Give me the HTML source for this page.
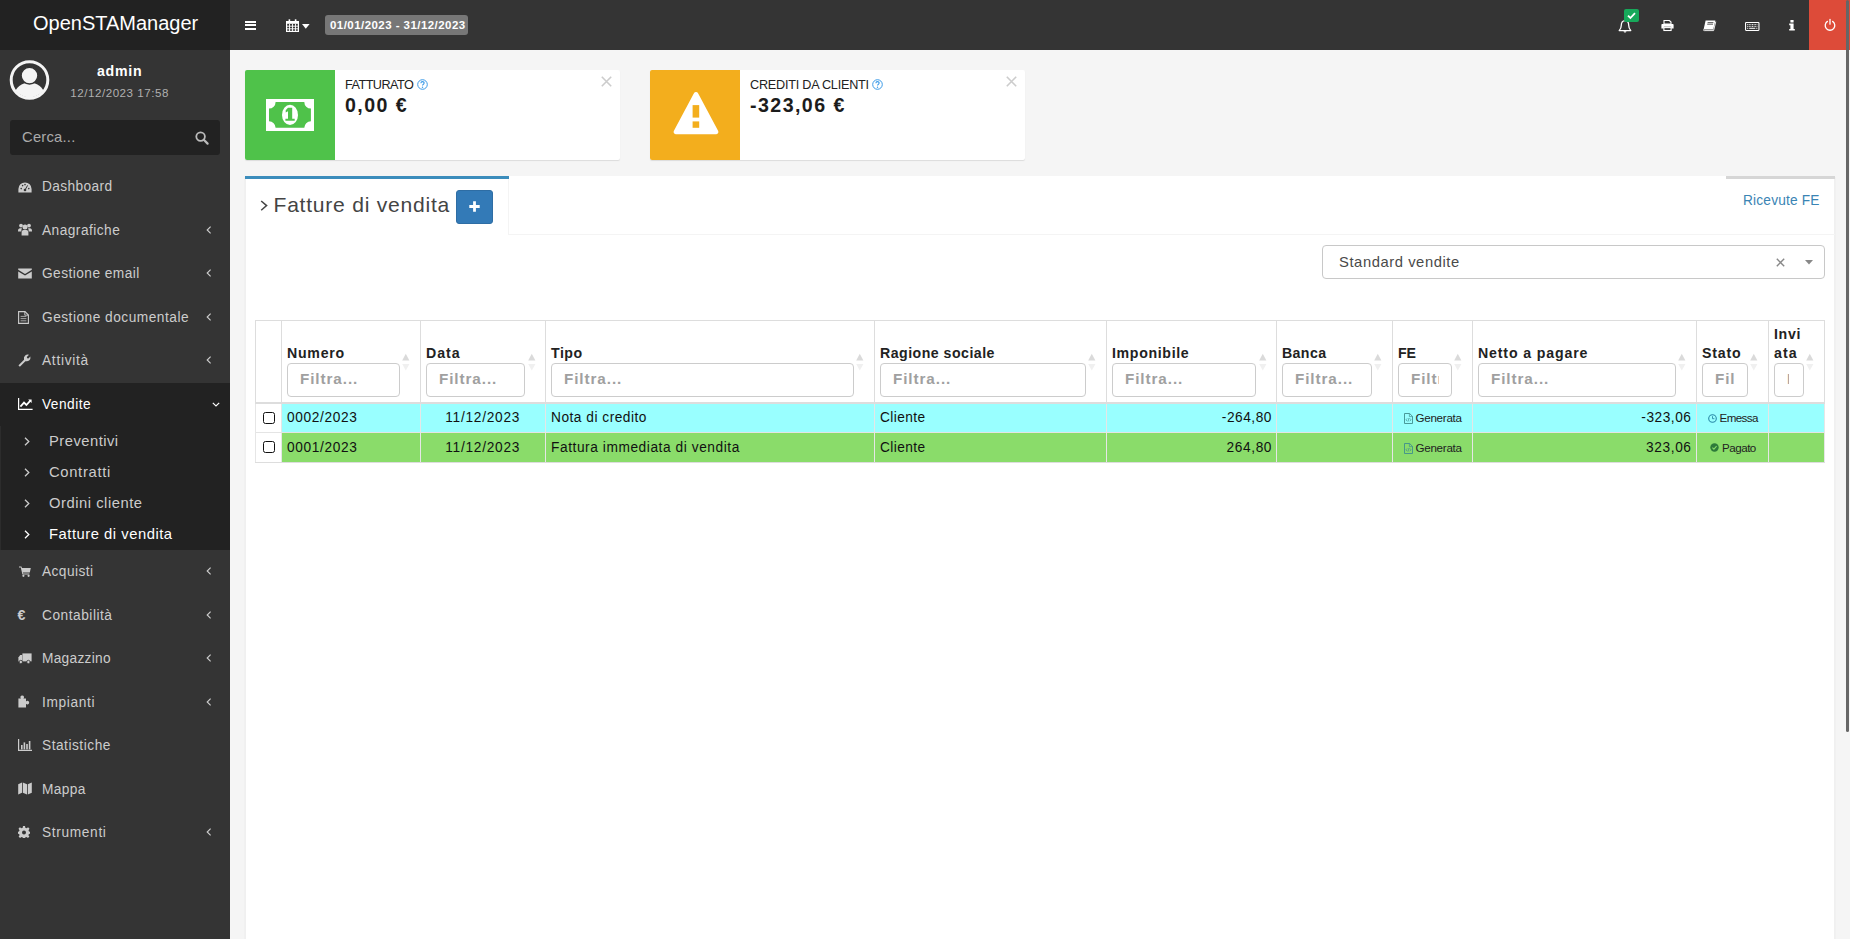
<!DOCTYPE html>
<html><head><meta charset="utf-8"><style>

*{box-sizing:border-box;margin:0;padding:0}
html,body{width:1850px;height:939px;overflow:hidden;background:#f5f5f5;font-family:"Liberation Sans",sans-serif;color:#333}
.a{position:absolute}
.t{position:absolute;white-space:nowrap}
svg{position:absolute;overflow:visible}
</style></head><body>
<div class="a" style="left:0;top:0;width:230px;height:50px;background:#222"></div>
<span class="t" style="left:33px;top:0;font-family:'Liberation Sans',sans-serif;font-size:20px;line-height:47px;color:#fff">OpenSTAManager</span>
<div class="a" style="left:230px;top:0;width:1620px;height:50px;background:#343434"></div>
<div class="a" style="left:245px;top:21px;width:11px;height:2px;background:#fff"></div>
<div class="a" style="left:245px;top:24.2px;width:11px;height:2px;background:#fff"></div>
<div class="a" style="left:245px;top:28.2px;width:11px;height:2px;background:#fff"></div>
<svg style="left:286px;top:19px" width="13" height="13" viewBox="0 0 13 13">
<rect x="0.6" y="2.6" width="11.8" height="9.8" fill="none" stroke="#fff" stroke-width="1.2"></rect>
<rect x="0.6" y="2.6" width="11.8" height="2.2" fill="#fff"></rect>
<path d="M0.6 7.2H12.4M0.6 9.8H12.4M3.5 4.8V12.4M6.5 4.8V12.4M9.5 4.8V12.4" stroke="#fff" stroke-width="0.9"></path>
<rect x="2.6" y="0.3" width="1.6" height="3.2" fill="#fff"></rect><rect x="8.8" y="0.3" width="1.6" height="3.2" fill="#fff"></rect>
</svg>
<svg style="left:302px;top:23.5px" width="8" height="5" viewBox="0 0 8 5"><path d="M0 0H7.6L3.8 4.8Z" fill="#fff"></path></svg>
<div class="a" style="left:325px;top:15px;width:143px;height:20px;background:#777;border-radius:3px"></div>
<span class="t k1045" style="left: 330px; top: 15px; font-size: 11.49px; font-weight: bold; line-height: 20px; color: rgb(255, 255, 255); letter-spacing: 0.455px;">01/01/2023 - 31/12/2023</span>
<svg style="left:1618px;top:19px" width="14" height="14" viewBox="0 0 14 14">
<path d="M7 1.6C4.6 1.6 3.3 3.6 3.3 6.2C3.3 9 2.4 10.3 1.2 11.6H12.8C11.6 10.3 10.7 9 10.7 6.2C10.7 3.6 9.4 1.6 7 1.6Z" fill="none" stroke="#fff" stroke-width="1.3" stroke-linejoin="round"></path>
<path d="M5.6 12.2H8.4C8.4 13.2 7.6 13.6 7 13.6C6.4 13.6 5.6 13.2 5.6 12.2Z" fill="#fff"></path>
</svg>
<div class="a" style="left:1624px;top:9px;width:15px;height:13px;background:#17a85a;border-radius:2px"></div>
<svg style="left:1627px;top:12px" width="9" height="7" viewBox="0 0 9 7"><path d="M1 3.6L3.4 6L8 1.2" fill="none" stroke="#fff" stroke-width="1.8"></path></svg>
<svg style="left:1660.5px;top:20px" width="13" height="11" viewBox="0 0 13 11">
<path d="M3 0.5H8.4L10 2.1V4H3Z" fill="none" stroke="#fff" stroke-width="1.1"></path>
<path d="M1.2 4H11.8Q12.6 4 12.6 4.8V8.4H10.2V6.8H2.8V8.4H0.4V4.8Q0.4 4 1.2 4Z" fill="#fff"></path>
<rect x="2.9" y="7.6" width="7.2" height="2.9" fill="none" stroke="#fff" stroke-width="1.1"></rect>
</svg>
<svg style="left:1703px;top:20px" width="14" height="11" viewBox="0 0 14 11">
<path d="M2.6 0.4H12.4L10.2 9.4H0.6Z" fill="#fff"></path>
<path d="M0.5 9.6Q0.3 10.6 1.3 10.6H10.6L12.8 1.6" fill="none" stroke="#fff" stroke-width="0.9"></path>
<path d="M4.6 2.6H10.4M4.2 4.2H10" stroke="#343434" stroke-width="0.8"></path>
</svg>
<svg style="left:1745px;top:21.5px" width="14.5" height="9" viewBox="0 0 14.5 9">
<rect x="0.55" y="0.55" width="13.4" height="7.9" rx="0.6" fill="none" stroke="#fff" stroke-width="1.1"></rect>
<path d="M2.2 2.6H12.3M2.2 4.4H12.3" stroke="#fff" stroke-width="0.9" stroke-dasharray="1 0.6"></path>
<path d="M2.2 6.3H3.2M4.2 6.3H10.3M11.3 6.3H12.3" stroke="#fff" stroke-width="1"></path>
</svg>
<svg style="left:1788.5px;top:19.8px" width="6" height="11" viewBox="0 0 6 11">
<rect x="1.4" y="0" width="3.2" height="2.4" rx="0.5" fill="#fff"></rect>
<path d="M0.2 3.6H4.6V9H5.8V10.6H0.2V9H1.4V5.2H0.2Z" fill="#fff"></path>
</svg>
<div class="a" style="left:1809px;top:0;width:41px;height:50px;background:#dd4b39"></div>
<svg style="left:1823.5px;top:17.9px" width="12" height="12.5" viewBox="0 0 12 12.5">
<path d="M3.4 3.4A4.8 4.8 0 1 0 8.6 3.4" fill="none" stroke="#fff" stroke-width="1.3" stroke-linecap="round"></path>
<path d="M6 1.5V6.2" stroke="#fff" stroke-width="1.3" stroke-linecap="round"></path>
</svg>
<div class="a" style="left:0;top:50px;width:230px;height:889px;background:#343434"></div>
<svg style="left:10px;top:60px" width="40" height="40" viewBox="0 0 40 40">
<defs><clipPath id="cc"><circle cx="19.5" cy="20" r="17.4"></circle></clipPath></defs>
<circle cx="19.5" cy="20" r="18.3" fill="none" stroke="#f4f4f4" stroke-width="3"></circle>
<g clip-path="url(#cc)" fill="#f4f4f4"><ellipse cx="19.5" cy="33.6" rx="14.4" ry="10.8"></ellipse></g>
<circle cx="19.5" cy="15.6" r="8.4" fill="#f4f4f4" stroke="#343434" stroke-width="1.4"></circle>
</svg>
<span class="t " style="left: 97px; top: 62px; font-size: 14.17px; font-weight: bold; line-height: 18px; color: rgb(255, 255, 255); letter-spacing: 0.728px;">admin</span>
<span class="t " style="left: 70.3px; top: 84.2px; font-size: 11.6px; line-height: 17px; color: rgb(176, 176, 176); letter-spacing: 0.521px;">12/12/2023 17:58</span>
<div class="a" style="left:10px;top:120px;width:210px;height:34.5px;background:#222;border-radius:3px"></div>
<span class="t " style="left: 22px; top: 121px; font-size: 14.77px; line-height: 33px; color: rgb(170, 170, 170); letter-spacing: 0.221px;">Cerca...</span>
<svg style="left:195px;top:131px" width="14" height="14" viewBox="0 0 14 14">
<circle cx="5.6" cy="5.6" r="4.3" fill="none" stroke="#bbb" stroke-width="1.8"></circle><path d="M8.8 8.8L12.6 12.6" stroke="#bbb" stroke-width="2.2" stroke-linecap="round"></path></svg>
<span class="t " style="left: 42px; top: 165.2px; font-size: 13.71px; line-height: 43.5px; color: rgb(204, 204, 204); letter-spacing: 0.387px;">Dashboard</span>
<svg style="left:17.5px;top:181.75px" width="14" height="11" viewBox="0 0 14 11"><path d="M7 0.4A6.6 6.6 0 0 0 0.4 7V10.4H13.6V7A6.6 6.6 0 0 0 7 0.4Z" fill="#ccc"></path><circle cx="7" cy="8" r="1.3" fill="#343434"></circle><path d="M7 8L9.6 3.4" stroke="#343434" stroke-width="1"></path><circle cx="3.2" cy="6.6" r="0.8" fill="#343434"></circle><circle cx="4.6" cy="3.6" r="0.8" fill="#343434"></circle><circle cx="10.8" cy="6.6" r="0.8" fill="#343434"></circle><circle cx="7" cy="2.6" r="0.8" fill="#343434"></circle></svg>
<span class="t " style="left: 42px; top: 208.7px; font-size: 13.71px; line-height: 43.5px; color: rgb(204, 204, 204); letter-spacing: 0.464px;">Anagrafiche</span>
<svg style="left:17.5px;top:223.25px" width="14" height="13" viewBox="0 0 14 13"><circle cx="3" cy="2.6" r="1.9" fill="#ccc"></circle><circle cx="11" cy="2.6" r="1.9" fill="#ccc"></circle><circle cx="7" cy="4" r="2.5" fill="#ccc"></circle><path d="M0 8Q0 5.2 2.2 5.2H4Q3.4 6 3.4 7.4V8.4H0Z" fill="#ccc"></path><path d="M14 8Q14 5.2 11.8 5.2H10Q10.6 6 10.6 7.4V8.4H14Z" fill="#ccc"></path><path d="M3.6 12.6V9.8Q3.6 7 5.6 7H8.4Q10.4 7 10.4 9.8V12.6Z" fill="#ccc"></path></svg>
<svg style="left:205.5px;top:225.75px" width="6" height="8" viewBox="0 0 6 8"><path d="M4.6 0.6L1.2 4L4.6 7.4" fill="none" stroke="#ccc" stroke-width="1.15"></path></svg>
<span class="t " style="left: 42px; top: 252.2px; font-size: 13.71px; line-height: 43.5px; color: rgb(204, 204, 204); letter-spacing: 0.452px;">Gestione email</span>
<svg style="left:17.5px;top:267.75px" width="14" height="11" viewBox="0 0 14 11"><path d="M0.2 0.4H13.8V1.8L7 6L0.2 1.8Z" fill="#ccc"></path><path d="M0.2 3.4L7 7.6L13.8 3.4V10.6H0.2Z" fill="#ccc"></path></svg>
<svg style="left:205.5px;top:269.25px" width="6" height="8" viewBox="0 0 6 8"><path d="M4.6 0.6L1.2 4L4.6 7.4" fill="none" stroke="#ccc" stroke-width="1.15"></path></svg>
<span class="t " style="left: 42px; top: 295.7px; font-size: 13.71px; line-height: 43.5px; color: rgb(204, 204, 204); letter-spacing: 0.496px;">Gestione documentale</span>
<svg style="left:18px;top:311.05px" width="11" height="13" viewBox="0 0 11 13"><path d="M0.6 0.6H7L10.4 4V12.4H0.6Z" fill="none" stroke="#ccc" stroke-width="1.1"></path><path d="M6.8 0.6V4.2H10.4" fill="none" stroke="#ccc" stroke-width="0.9"></path><path d="M2.6 5.4H8.4M2.6 7.6H8.4M2.6 9.8H8.4" stroke="#ccc" stroke-width="0.75"></path></svg>
<svg style="left:205.5px;top:312.75px" width="6" height="8" viewBox="0 0 6 8"><path d="M4.6 0.6L1.2 4L4.6 7.4" fill="none" stroke="#ccc" stroke-width="1.15"></path></svg>
<span class="t " style="left: 42px; top: 339.2px; font-size: 13.71px; line-height: 43.5px; color: rgb(204, 204, 204); letter-spacing: 0.715px;">Attività</span>
<svg style="left:17.5px;top:353.75px" width="13" height="13" viewBox="0 0 13 13"><path d="M1.6 12.4Q0.6 12.2 0.6 11.2L6 5.8Q5.4 3.2 7.2 1.6Q8.8 0.2 11 0.8L8.8 3L9.2 4.2L10.4 4.6L12.4 2.4Q12.8 4.6 11.4 6.2Q9.8 7.8 7.4 7.2L2.4 12.2Q2 12.6 1.6 12.4Z" fill="#ccc"></path></svg>
<svg style="left:205.5px;top:356.25px" width="6" height="8" viewBox="0 0 6 8"><path d="M4.6 0.6L1.2 4L4.6 7.4" fill="none" stroke="#ccc" stroke-width="1.15"></path></svg>
<div class="a" style="left:0;top:382.5px;width:230px;height:167.2px;background:#222"></div>
<div class="a" style="left:0;top:425.5px;width:1px;height:124px;background:#2c2c2c"></div>
<span class="t " style="left: 42px; top: 382.7px; font-size: 13.71px; line-height: 43.5px; color: rgb(255, 255, 255); letter-spacing: 0.48px;">Vendite</span>
<svg style="left:18px;top:397.75px" width="15" height="12" viewBox="0 0 15 12"><path d="M0.6 0V11.4H14.6" fill="none" stroke="#fff" stroke-width="1.2"></path><path d="M2.4 8.6L6 4.6L8.4 7L12.4 2.6" fill="none" stroke="#fff" stroke-width="1.8"></path><path d="M10.2 1.6H13.6V5Z" fill="#fff"></path></svg>
<svg style="left:212px;top:401.75px" width="8" height="5" viewBox="0 0 8 5"><path d="M0.8 0.8L4 4L7.2 0.8" fill="none" stroke="#fff" stroke-width="1.15"></path></svg>
<span class="t " style="left: 42px; top: 550.2px; font-size: 13.71px; line-height: 43.5px; color: rgb(204, 204, 204); letter-spacing: 0.428px;">Acquisti</span>
<svg style="left:18.5px;top:565.75px" width="12" height="11" viewBox="0 0 12 11"><path d="M0 0.4H2.4L3 2H11.8L10.8 6.6H3.8L4.2 7.6H10.4V8.6H3.4L1.8 1.4H0Z" fill="#ccc"></path><circle cx="4.4" cy="9.8" r="1.1" fill="#ccc"></circle><circle cx="9.6" cy="9.8" r="1.1" fill="#ccc"></circle></svg>
<svg style="left:205.5px;top:567.25px" width="6" height="8" viewBox="0 0 6 8"><path d="M4.6 0.6L1.2 4L4.6 7.4" fill="none" stroke="#ccc" stroke-width="1.15"></path></svg>
<span class="t " style="left: 42px; top: 593.7px; font-size: 13.71px; line-height: 43.5px; color: rgb(204, 204, 204); letter-spacing: 0.521px;">Contabilità</span>
<span class="t" style="left: 17.5px; top: 604.75px; font-size: 14.17px; font-weight: bold; line-height: 20px; color: rgb(204, 204, 204); letter-spacing: 1.172px;">€</span>
<svg style="left:205.5px;top:610.75px" width="6" height="8" viewBox="0 0 6 8"><path d="M4.6 0.6L1.2 4L4.6 7.4" fill="none" stroke="#ccc" stroke-width="1.15"></path></svg>
<span class="t " style="left: 42px; top: 637.2px; font-size: 13.71px; line-height: 43.5px; color: rgb(204, 204, 204); letter-spacing: 0.286px;">Magazzino</span>
<svg style="left:17.5px;top:652.75px" width="14" height="11" viewBox="0 0 14 11"><path d="M4.4 0.4H13.6V8.4H4.4Z" fill="#ccc"></path><path d="M0.4 4.6L2.2 2H4.2V8.4H0.4Z" fill="#ccc"></path><circle cx="2.8" cy="9" r="1.7" fill="#ccc" stroke="#343434" stroke-width="0.8"></circle><circle cx="10.4" cy="9" r="1.7" fill="#ccc" stroke="#343434" stroke-width="0.8"></circle></svg>
<svg style="left:205.5px;top:654.25px" width="6" height="8" viewBox="0 0 6 8"><path d="M4.6 0.6L1.2 4L4.6 7.4" fill="none" stroke="#ccc" stroke-width="1.15"></path></svg>
<span class="t " style="left: 42px; top: 680.7px; font-size: 13.71px; line-height: 43.5px; color: rgb(204, 204, 204); letter-spacing: 0.662px;">Impianti</span>
<svg style="left:17.5px;top:695.25px" width="13" height="13" viewBox="0 0 13 13"><path d="M0.4 3.6H3Q2.2 2.8 2.4 1.8Q2.8 0.4 4.2 0.4Q5.6 0.4 6 1.8Q6.2 2.8 5.4 3.6H8V6.4Q8.8 5.6 9.8 5.8Q11.2 6.2 11.2 7.6Q11.2 9 9.8 9.4Q8.8 9.6 8 8.8V12.6H0.4Z" fill="#ccc"></path></svg>
<svg style="left:205.5px;top:697.75px" width="6" height="8" viewBox="0 0 6 8"><path d="M4.6 0.6L1.2 4L4.6 7.4" fill="none" stroke="#ccc" stroke-width="1.15"></path></svg>
<span class="t " style="left: 42px; top: 724.2px; font-size: 13.71px; line-height: 43.5px; color: rgb(204, 204, 204); letter-spacing: 0.517px;">Statistiche</span>
<svg style="left:17.5px;top:739.25px" width="14" height="12" viewBox="0 0 14 12"><path d="M0.6 0V11.4H14" fill="none" stroke="#ccc" stroke-width="1.2"></path><rect x="3" y="6" width="1.6" height="4.4" fill="#ccc"></rect><rect x="5.6" y="3.4" width="1.6" height="7" fill="#ccc"></rect><rect x="8.2" y="5" width="1.6" height="5.4" fill="#ccc"></rect><rect x="10.8" y="2" width="1.6" height="8.4" fill="#ccc"></rect></svg>
<span class="t " style="left: 42px; top: 767.7px; font-size: 13.71px; line-height: 43.5px; color: rgb(204, 204, 204); letter-spacing: 0.35px;">Mappa</span>
<svg style="left:17.5px;top:782.25px" width="14" height="13" viewBox="0 0 14 13"><path d="M0.2 2.2L4 0.4V10.8L0.2 12.6Z" fill="#ccc"></path><path d="M4.8 0.4L9 2.2V12.6L4.8 10.8Z" fill="#ccc"></path><path d="M9.8 2.2L13.8 0.4V10.8L9.8 12.6Z" fill="#ccc"></path></svg>
<span class="t " style="left: 42px; top: 811.2px; font-size: 13.71px; line-height: 43.5px; color: rgb(204, 204, 204); letter-spacing: 0.656px;">Strumenti</span>
<svg style="left:18px;top:826.25px" width="12" height="12" viewBox="0 0 12 12"><path d="M5 0H7L7.3 1.7L8.6 2.3L10.1 1.3L11.5 2.7L10.5 4.2L11 5.5L12 5.7V7.7L10.9 7.9L10.4 9.2L11.4 10.6L10 12L8.5 11L7.2 11.5L7 12H5L4.8 11.5L3.5 11L2 12L0.6 10.6L1.6 9.2L1.1 7.9L0 7.7V5.7L1 5.5L1.5 4.2L0.5 2.7L1.9 1.3L3.4 2.3L4.7 1.7Z" fill="#ccc"></path><circle cx="6" cy="6.6" r="2" fill="#343434"></circle></svg>
<svg style="left:205.5px;top:828.25px" width="6" height="8" viewBox="0 0 6 8"><path d="M4.6 0.6L1.2 4L4.6 7.4" fill="none" stroke="#ccc" stroke-width="1.15"></path></svg>
<span class="t " style="left: 49px; top: 425.5px; font-size: 14.77px; line-height: 31px; color: rgb(204, 204, 204); letter-spacing: 0.475px;">Preventivi</span>
<svg style="left:23.5px;top:436.5px" width="6" height="9" viewBox="0 0 6 9"><path d="M1 0.8L4.8 4.5L1 8.2" fill="none" stroke="#ccc" stroke-width="1.3"></path></svg>
<span class="t " style="left: 49px; top: 456.5px; font-size: 14.77px; line-height: 31px; color: rgb(204, 204, 204); letter-spacing: 0.677px;">Contratti</span>
<svg style="left:23.5px;top:467.5px" width="6" height="9" viewBox="0 0 6 9"><path d="M1 0.8L4.8 4.5L1 8.2" fill="none" stroke="#ccc" stroke-width="1.3"></path></svg>
<span class="t " style="left: 49px; top: 487.5px; font-size: 14.77px; line-height: 31px; color: rgb(204, 204, 204); letter-spacing: 0.53px;">Ordini cliente</span>
<svg style="left:23.5px;top:498.5px" width="6" height="9" viewBox="0 0 6 9"><path d="M1 0.8L4.8 4.5L1 8.2" fill="none" stroke="#ccc" stroke-width="1.3"></path></svg>
<span class="t " style="left: 49px; top: 518.5px; font-size: 14.77px; line-height: 31px; color: rgb(255, 255, 255); letter-spacing: 0.526px;">Fatture di vendita</span>
<svg style="left:23.5px;top:529.5px" width="6" height="9" viewBox="0 0 6 9"><path d="M1 0.8L4.8 4.5L1 8.2" fill="none" stroke="#fff" stroke-width="1.3"></path></svg>
<div class="a" style="left:245px;top:70px;width:375px;height:90px;background:#fff;border-radius:2px;box-shadow:0 1px 1px rgba(0,0,0,.1)"></div>
<div class="a" style="left:245px;top:70px;width:90px;height:90px;background:#4fc24a;border-radius:2px 0 0 2px"></div>
<svg style="left:266px;top:99px" width="48" height="32" viewBox="0 0 48 32">
<rect x="0" y="0" width="48" height="32" fill="#fff"></rect>
<path d="M9.6 3H38.3A6.6 6.6 0 0 0 44.9 9.6V22.2A6.6 6.6 0 0 0 38.3 28.8H9.6A6.6 6.6 0 0 0 3 22.2V9.6A6.6 6.6 0 0 0 9.6 3Z" fill="#4fc24a"></path>
<ellipse cx="24" cy="15.9" rx="8" ry="10.1" fill="#fff"></ellipse>
<path d="M22 8.8H26.2V19.8H28.7V21.8H19.4V19.8H22V12.3L19.7 13.6V11.2Z" fill="#4fc24a"></path>
</svg>
<span class="t " style="left: 345px; top: 77.8px; font-size: 12.66px; line-height: 14px; color: rgb(34, 34, 34); letter-spacing: -0.545px;">FATTURATO</span>
<svg style="left:416.5px;top:79px" width="11" height="11" viewBox="0 0 11 11"><circle cx="5.5" cy="5.5" r="4.8" fill="none" stroke="#3a9ae8" stroke-width="1"></circle><path d="M3.9 4.2Q3.9 2.6 5.5 2.6Q7.1 2.6 7.1 4Q7.1 4.9 6.2 5.4Q5.5 5.8 5.5 6.6" fill="none" stroke="#3a9ae8" stroke-width="1.1"></path><circle cx="5.5" cy="8.2" r="0.7" fill="#3a9ae8"></circle></svg>
<span class="t " style="left: 345px; top: 95.3px; font-size: 19.62px; font-weight: bold; line-height: 20px; color: rgb(28, 28, 28); letter-spacing: 1.445px;">0,00 €</span>
<svg style="left:600.5px;top:76px" width="11" height="11" viewBox="0 0 11 11"><path d="M0.8 0.8L10.2 10.2M10.2 0.8L0.8 10.2" stroke="#ccc" stroke-width="1.6"></path></svg>
<div class="a" style="left:650px;top:70px;width:375px;height:90px;background:#fff;border-radius:2px;box-shadow:0 1px 1px rgba(0,0,0,.1)"></div>
<div class="a" style="left:650px;top:70px;width:90px;height:90px;background:#f3ae1d;border-radius:2px 0 0 2px"></div>
<svg style="left:673px;top:92px" width="46" height="42" viewBox="0 0 46 42">
<path d="M23 0Q24.4 0 25.2 1.4L45.2 38.9Q45.8 40.3 44.9 41.3Q44.3 42.2 43 42.2H3Q1.7 42.2 1.1 41.3Q0.2 40.3 0.8 38.9L20.8 1.4Q21.6 0 23 0Z" fill="#fff"></path>
<rect x="19.6" y="13.1" width="6.6" height="12.5" fill="#f3ae1d"></rect>
<rect x="19.6" y="29.4" width="6.6" height="6.4" fill="#f3ae1d"></rect>
</svg>
<span class="t " style="left: 750px; top: 77.8px; font-size: 12.66px; line-height: 14px; color: rgb(34, 34, 34); letter-spacing: -0.234px;">CREDITI DA CLIENTI</span>
<svg style="left:872px;top:79px" width="11" height="11" viewBox="0 0 11 11"><circle cx="5.5" cy="5.5" r="4.8" fill="none" stroke="#3a9ae8" stroke-width="1"></circle><path d="M3.9 4.2Q3.9 2.6 5.5 2.6Q7.1 2.6 7.1 4Q7.1 4.9 6.2 5.4Q5.5 5.8 5.5 6.6" fill="none" stroke="#3a9ae8" stroke-width="1.1"></path><circle cx="5.5" cy="8.2" r="0.7" fill="#3a9ae8"></circle></svg>
<span class="t " style="left: 750px; top: 95.3px; font-size: 19.62px; font-weight: bold; line-height: 20px; color: rgb(28, 28, 28); letter-spacing: 1.429px;">-323,06 €</span>
<svg style="left:1005.5px;top:76px" width="11" height="11" viewBox="0 0 11 11"><path d="M0.8 0.8L10.2 10.2M10.2 0.8L0.8 10.2" stroke="#ccc" stroke-width="1.6"></path></svg>
<div class="a" style="left:245px;top:176px;width:1590px;height:770px;background:#fff;box-shadow:0 1px 1px rgba(0,0,0,.1)"></div>
<div class="a" style="left:245px;top:176px;width:1px;height:770px;background:#f0f0f0"></div>
<div class="a" style="left:1834px;top:176px;width:1px;height:770px;background:#f0f0f0"></div>
<div class="a" style="left:508px;top:234px;width:1327px;height:1px;background:#f4f4f4"></div>
<div class="a" style="left:245px;top:176px;width:264px;height:3px;background:#3c8dbc"></div>
<div class="a" style="left:508px;top:179px;width:1px;height:56px;background:#f4f4f4"></div>
<svg style="left:259.5px;top:199.5px" width="8" height="11.5" viewBox="0 0 8 11.5"><path d="M1.2 1L6.6 5.6L1.2 10.3" fill="none" stroke="#444" stroke-width="1.5"></path></svg>
<span class="t " style="left: 273.5px; top: 191px; font-size: 21.1px; line-height: 28px; color: rgb(68, 68, 68); letter-spacing: 0.752px;">Fatture di vendita</span>
<div class="a" style="left:456px;top:190px;width:37px;height:34px;background:#337ab7;border-radius:3px;border:1px solid #2e6da4"></div>
<svg style="left:469px;top:201px" width="11" height="11" viewBox="0 0 11 11"><path d="M5.5 0.3V10.7M0.3 5.5H10.7" stroke="#fff" stroke-width="2.8"></path></svg>
<div class="a" style="left:1726px;top:176px;width:109px;height:3px;background:#d6d6d6"></div>
<span class="t " style="left: 1743px; top: 190.5px; font-size: 13.71px; line-height: 20px; color: rgb(58, 132, 180); letter-spacing: 0.183px;">Ricevute FE</span>
<div class="a" style="left:1322px;top:245px;width:503px;height:34px;border:1px solid #c8c8c8;border-radius:4px;background:#fff"></div>
<span class="t " style="left: 1339px; top: 252px; font-size: 14.77px; line-height: 20px; color: rgb(74, 74, 74); letter-spacing: 0.571px;">Standard vendite</span>
<svg style="left:1775.5px;top:258px" width="9" height="9" viewBox="0 0 9 9"><path d="M0.8 0.8L8.2 8.2M8.2 0.8L0.8 8.2" stroke="#888" stroke-width="1.4"></path></svg>
<svg style="left:1805px;top:259.5px" width="8" height="5" viewBox="0 0 8 5"><path d="M0 0H8L4 4.4Z" fill="#888"></path></svg>
<div class="a" style="left:255px;top:320px;width:1570px;height:1px;background:#ddd"></div>
<div class="a" style="left:255px;top:402px;width:1570px;height:2px;background:#ddd"></div>
<div class="a" style="left:282px;top:404px;width:1542px;height:28px;background:#99ffff"></div>
<div class="a" style="left:282px;top:433px;width:1542px;height:29px;background:#8adc6a"></div>
<div class="a" style="left:255px;top:462px;width:1570px;height:1px;background:#ddd"></div>
<div class="a" style="left:255px;top:432px;width:1570px;height:1px;background:#e4e4e4"></div>
<div class="a" style="left:255px;top:320px;width:1px;height:82px;background:#ddd"></div>
<div class="a" style="left:255px;top:404px;width:1px;height:58px;background:#e6e6e6"></div>
<div class="a" style="left:281px;top:320px;width:1px;height:82px;background:#ddd"></div>
<div class="a" style="left:281px;top:404px;width:1px;height:58px;background:#e6e6e6"></div>
<div class="a" style="left:420px;top:320px;width:1px;height:82px;background:#ddd"></div>
<div class="a" style="left:420px;top:404px;width:1px;height:58px;background:#e6e6e6"></div>
<div class="a" style="left:545px;top:320px;width:1px;height:82px;background:#ddd"></div>
<div class="a" style="left:545px;top:404px;width:1px;height:58px;background:#e6e6e6"></div>
<div class="a" style="left:874px;top:320px;width:1px;height:82px;background:#ddd"></div>
<div class="a" style="left:874px;top:404px;width:1px;height:58px;background:#e6e6e6"></div>
<div class="a" style="left:1106px;top:320px;width:1px;height:82px;background:#ddd"></div>
<div class="a" style="left:1106px;top:404px;width:1px;height:58px;background:#e6e6e6"></div>
<div class="a" style="left:1276px;top:320px;width:1px;height:82px;background:#ddd"></div>
<div class="a" style="left:1276px;top:404px;width:1px;height:58px;background:#e6e6e6"></div>
<div class="a" style="left:1392px;top:320px;width:1px;height:82px;background:#ddd"></div>
<div class="a" style="left:1392px;top:404px;width:1px;height:58px;background:#e6e6e6"></div>
<div class="a" style="left:1472px;top:320px;width:1px;height:82px;background:#ddd"></div>
<div class="a" style="left:1472px;top:404px;width:1px;height:58px;background:#e6e6e6"></div>
<div class="a" style="left:1696px;top:320px;width:1px;height:82px;background:#ddd"></div>
<div class="a" style="left:1696px;top:404px;width:1px;height:58px;background:#e6e6e6"></div>
<div class="a" style="left:1768px;top:320px;width:1px;height:82px;background:#ddd"></div>
<div class="a" style="left:1768px;top:404px;width:1px;height:58px;background:#e6e6e6"></div>
<div class="a" style="left:1824px;top:320px;width:1px;height:82px;background:#ddd"></div>
<div class="a" style="left:1824px;top:404px;width:1px;height:58px;background:#e6e6e6"></div>
<span class="t " style="left: 287px; top: 344px; font-size: 14.17px; font-weight: bold; line-height: 19px; color: rgb(34, 34, 34); letter-spacing: 0.724px;">Numero</span>
<div class="a" style="left:287px;top:363px;width:113px;height:34px;border:1px solid #ccc;border-radius:4px;background:#fff;overflow:hidden"><div class="a" style="left:12px;right:12px;top:0;height:32px;overflow:hidden"><span class="t" style="left: 0px; top: -0.6px; font-size: 15.26px; font-weight: bold; line-height: 32px; color: rgb(160, 160, 160); letter-spacing: 0.908px;">Filtra...</span></div></div>
<svg style="left:402px;top:353px" width="8" height="17" viewBox="0 0 8 17"><path d="M0.2 7.6L3.8 0.8L7.4 7.6Z" fill="#dadada"></path><path d="M0.2 11L3.8 17.4L7.4 11Z" fill="#f0f0f0"></path></svg>
<span class="t " style="left: 426px; top: 344px; font-size: 14.17px; font-weight: bold; line-height: 19px; color: rgb(34, 34, 34); letter-spacing: 0.969px;">Data</span>
<div class="a" style="left:426px;top:363px;width:99px;height:34px;border:1px solid #ccc;border-radius:4px;background:#fff;overflow:hidden"><div class="a" style="left:12px;right:12px;top:0;height:32px;overflow:hidden"><span class="t" style="left: 0px; top: -0.6px; font-size: 15.26px; font-weight: bold; line-height: 32px; color: rgb(160, 160, 160); letter-spacing: 0.908px;">Filtra...</span></div></div>
<svg style="left:527.5px;top:353px" width="8" height="17" viewBox="0 0 8 17"><path d="M0.2 7.6L3.8 0.8L7.4 7.6Z" fill="#dadada"></path><path d="M0.2 11L3.8 17.4L7.4 11Z" fill="#f0f0f0"></path></svg>
<span class="t " style="left: 551px; top: 344px; font-size: 14.17px; font-weight: bold; line-height: 19px; color: rgb(34, 34, 34); letter-spacing: 0.484px;">Tipo</span>
<div class="a" style="left:551px;top:363px;width:302.5px;height:34px;border:1px solid #ccc;border-radius:4px;background:#fff;overflow:hidden"><div class="a" style="left:12px;right:12px;top:0;height:32px;overflow:hidden"><span class="t" style="left: 0px; top: -0.6px; font-size: 15.26px; font-weight: bold; line-height: 32px; color: rgb(160, 160, 160); letter-spacing: 0.908px;">Filtra...</span></div></div>
<svg style="left:856px;top:353px" width="8" height="17" viewBox="0 0 8 17"><path d="M0.2 7.6L3.8 0.8L7.4 7.6Z" fill="#dadada"></path><path d="M0.2 11L3.8 17.4L7.4 11Z" fill="#f0f0f0"></path></svg>
<span class="t " style="left: 880px; top: 344px; font-size: 14.17px; font-weight: bold; line-height: 19px; color: rgb(34, 34, 34); letter-spacing: 0.477px;">Ragione sociale</span>
<div class="a" style="left:880px;top:363px;width:206px;height:34px;border:1px solid #ccc;border-radius:4px;background:#fff;overflow:hidden"><div class="a" style="left:12px;right:12px;top:0;height:32px;overflow:hidden"><span class="t" style="left: 0px; top: -0.6px; font-size: 15.26px; font-weight: bold; line-height: 32px; color: rgb(160, 160, 160); letter-spacing: 0.908px;">Filtra...</span></div></div>
<svg style="left:1088px;top:353px" width="8" height="17" viewBox="0 0 8 17"><path d="M0.2 7.6L3.8 0.8L7.4 7.6Z" fill="#dadada"></path><path d="M0.2 11L3.8 17.4L7.4 11Z" fill="#f0f0f0"></path></svg>
<span class="t " style="left: 1112px; top: 344px; font-size: 14.17px; font-weight: bold; line-height: 19px; color: rgb(34, 34, 34); letter-spacing: 0.659px;">Imponibile</span>
<div class="a" style="left:1112px;top:363px;width:144px;height:34px;border:1px solid #ccc;border-radius:4px;background:#fff;overflow:hidden"><div class="a" style="left:12px;right:12px;top:0;height:32px;overflow:hidden"><span class="t" style="left: 0px; top: -0.6px; font-size: 15.26px; font-weight: bold; line-height: 32px; color: rgb(160, 160, 160); letter-spacing: 0.908px;">Filtra...</span></div></div>
<svg style="left:1258.5px;top:353px" width="8" height="17" viewBox="0 0 8 17"><path d="M0.2 7.6L3.8 0.8L7.4 7.6Z" fill="#dadada"></path><path d="M0.2 11L3.8 17.4L7.4 11Z" fill="#f0f0f0"></path></svg>
<span class="t " style="left: 1282px; top: 344px; font-size: 14.17px; font-weight: bold; line-height: 19px; color: rgb(34, 34, 34); letter-spacing: 0.384px;">Banca</span>
<div class="a" style="left:1282px;top:363px;width:90px;height:34px;border:1px solid #ccc;border-radius:4px;background:#fff;overflow:hidden"><div class="a" style="left:12px;right:12px;top:0;height:32px;overflow:hidden"><span class="t" style="left: 0px; top: -0.6px; font-size: 15.26px; font-weight: bold; line-height: 32px; color: rgb(160, 160, 160); letter-spacing: 0.908px;">Filtra...</span></div></div>
<svg style="left:1374px;top:353px" width="8" height="17" viewBox="0 0 8 17"><path d="M0.2 7.6L3.8 0.8L7.4 7.6Z" fill="#dadada"></path><path d="M0.2 11L3.8 17.4L7.4 11Z" fill="#f0f0f0"></path></svg>
<span class="t " style="left: 1398px; top: 344px; font-size: 14.17px; font-weight: bold; line-height: 19px; color: rgb(34, 34, 34); letter-spacing: -0.164px;">FE</span>
<div class="a" style="left:1398px;top:363px;width:54px;height:34px;border:1px solid #ccc;border-radius:4px;background:#fff;overflow:hidden"><div class="a" style="left:12px;right:12px;top:0;height:32px;overflow:hidden"><span class="t" style="left: 0px; top: -0.6px; font-size: 15.26px; font-weight: bold; line-height: 32px; color: rgb(160, 160, 160); letter-spacing: 0.908px;">Filtra...</span></div></div>
<svg style="left:1454px;top:353px" width="8" height="17" viewBox="0 0 8 17"><path d="M0.2 7.6L3.8 0.8L7.4 7.6Z" fill="#dadada"></path><path d="M0.2 11L3.8 17.4L7.4 11Z" fill="#f0f0f0"></path></svg>
<span class="t " style="left: 1478px; top: 344px; font-size: 14.17px; font-weight: bold; line-height: 19px; color: rgb(34, 34, 34); letter-spacing: 0.852px;">Netto a pagare</span>
<div class="a" style="left:1478px;top:363px;width:198px;height:34px;border:1px solid #ccc;border-radius:4px;background:#fff;overflow:hidden"><div class="a" style="left:12px;right:12px;top:0;height:32px;overflow:hidden"><span class="t" style="left: 0px; top: -0.6px; font-size: 15.26px; font-weight: bold; line-height: 32px; color: rgb(160, 160, 160); letter-spacing: 0.908px;">Filtra...</span></div></div>
<svg style="left:1678.4px;top:353px" width="8" height="17" viewBox="0 0 8 17"><path d="M0.2 7.6L3.8 0.8L7.4 7.6Z" fill="#dadada"></path><path d="M0.2 11L3.8 17.4L7.4 11Z" fill="#f0f0f0"></path></svg>
<span class="t " style="left: 1702px; top: 344px; font-size: 14.17px; font-weight: bold; line-height: 19px; color: rgb(34, 34, 34); letter-spacing: 0.822px;">Stato</span>
<div class="a" style="left:1702px;top:363px;width:46px;height:34px;border:1px solid #ccc;border-radius:4px;background:#fff;overflow:hidden"><div class="a" style="left:12px;right:12px;top:0;height:32px;overflow:hidden"><span class="t" style="left: 0px; top: -0.6px; font-size: 15.26px; font-weight: bold; line-height: 32px; color: rgb(160, 160, 160); letter-spacing: 0.908px;">Filtra...</span></div></div>
<svg style="left:1750px;top:353px" width="8" height="17" viewBox="0 0 8 17"><path d="M0.2 7.6L3.8 0.8L7.4 7.6Z" fill="#dadada"></path><path d="M0.2 11L3.8 17.4L7.4 11Z" fill="#f0f0f0"></path></svg>
<span class="t " style="left: 1774px; top: 325px; font-size: 14.17px; font-weight: bold; line-height: 19px; color: rgb(34, 34, 34); letter-spacing: 0.66px;">Invi</span>
<span class="t " style="left: 1774px; top: 344px; font-size: 14.17px; font-weight: bold; line-height: 19px; color: rgb(34, 34, 34); letter-spacing: 1.099px;">ata</span>
<div class="a" style="left:1774px;top:363px;width:30px;height:34px;border:1px solid #ccc;border-radius:4px;background:#fff;overflow:hidden"><div class="a" style="left:12px;right:13.7px;top:0;height:32px;overflow:hidden"><span class="t" style="left: 0px; top: -0.6px; font-size: 15.26px; font-weight: bold; line-height: 32px; color: rgb(160, 160, 160); letter-spacing: 0.908px;">Filtra...</span></div></div>
<svg style="left:1806px;top:353px" width="8" height="17" viewBox="0 0 8 17"><path d="M0.2 7.6L3.8 0.8L7.4 7.6Z" fill="#dadada"></path><path d="M0.2 11L3.8 17.4L7.4 11Z" fill="#f0f0f0"></path></svg>
<div class="a" style="left:263px;top:412px;width:12px;height:11.8px;border:1.2px solid #111;border-radius:2.5px;background:#fff"></div>
<div class="a" style="left:263px;top:441.2px;width:12px;height:11.8px;border:1.2px solid #111;border-radius:2.5px;background:#fff"></div>
<span class="t " style="left: 287px; top: 403.9px; font-size: 13.71px; line-height: 28.6px; color: rgb(17, 17, 17); letter-spacing: 0.642px;">0002/2023</span>
<span class="t" style="left: 420px; width: 125px; top: 403.9px; text-align: center; font-size: 13.71px; line-height: 28.6px; color: rgb(17, 17, 17); letter-spacing: 0.736px; text-indent: 0.368px;">11/12/2023</span>
<span class="t " style="left: 551px; top: 403.9px; font-size: 13.71px; line-height: 28.6px; color: rgb(17, 17, 17); letter-spacing: 0.509px;">Nota di credito</span>
<span class="t " style="left: 880px; top: 403.9px; font-size: 13.71px; line-height: 28.6px; color: rgb(17, 17, 17); letter-spacing: 0.426px;">Cliente</span>
<span class="t" style="right: 578.5px; top: 403.9px; font-size: 13.71px; line-height: 28.6px; color: rgb(17, 17, 17); letter-spacing: 0.529px; margin-right: -0.529px;">-264,80</span>
<span class="t" style="right: 159px; top: 403.9px; font-size: 13.71px; line-height: 28.6px; color: rgb(17, 17, 17); letter-spacing: 0.529px; margin-right: -0.529px;">-323,06</span>
<svg style="left:1404px;top:412.7px" width="9" height="11" viewBox="0 0 9 11"><path d="M0.5 0.5H5.6L8.5 3.4V10.5H0.5Z" fill="none" stroke="#3f8f8f" stroke-width="0.9"></path><path d="M5.4 0.5V3.6H8.5" fill="none" stroke="#3f8f8f" stroke-width="0.7"></path><path d="M3.2 5.4L2 6.8L3.2 8.2M5.8 5.4L7 6.8L5.8 8.2M5 5L4 8.6" fill="none" stroke="#3f8f8f" stroke-width="0.7"></path></svg>
<span class="t " style="left: 1415.5px; top: 403.9px; font-size: 11.6px; line-height: 28.6px; color: rgb(34, 34, 34); letter-spacing: -0.268px;">Generata</span>
<svg style="left:1708px;top:413.5px" width="9" height="9" viewBox="0 0 9 9"><circle cx="4.5" cy="4.5" r="3.8" fill="none" stroke="#2a8aa8" stroke-width="1.1"></circle><path d="M4.5 2.2V4.7H6.4" fill="none" stroke="#2a8aa8" stroke-width="0.9"></path></svg>
<span class="t " style="left: 1719.5px; top: 403.9px; font-size: 11.6px; line-height: 28.6px; color: rgb(34, 34, 34); letter-spacing: -0.586px;">Emessa</span>
<span class="t " style="left: 287px; top: 433.8px; font-size: 13.71px; line-height: 28.6px; color: rgb(17, 17, 17); letter-spacing: 0.642px;">0001/2023</span>
<span class="t" style="left: 420px; width: 125px; top: 433.8px; text-align: center; font-size: 13.71px; line-height: 28.6px; color: rgb(17, 17, 17); letter-spacing: 0.736px; text-indent: 0.368px;">11/12/2023</span>
<span class="t " style="left: 551px; top: 433.8px; font-size: 13.71px; line-height: 28.6px; color: rgb(17, 17, 17); letter-spacing: 0.573px;">Fattura immediata di vendita</span>
<span class="t " style="left: 880px; top: 433.8px; font-size: 13.71px; line-height: 28.6px; color: rgb(17, 17, 17); letter-spacing: 0.426px;">Cliente</span>
<span class="t" style="right: 578.5px; top: 433.8px; font-size: 13.71px; line-height: 28.6px; color: rgb(17, 17, 17); letter-spacing: 0.596px; margin-right: -0.596px;">264,80</span>
<span class="t" style="right: 159px; top: 433.8px; font-size: 13.71px; line-height: 28.6px; color: rgb(17, 17, 17); letter-spacing: 0.596px; margin-right: -0.596px;">323,06</span>
<svg style="left:1404px;top:442.59999999999997px" width="9" height="11" viewBox="0 0 9 11"><path d="M0.5 0.5H5.6L8.5 3.4V10.5H0.5Z" fill="none" stroke="#3f8f8f" stroke-width="0.9"></path><path d="M5.4 0.5V3.6H8.5" fill="none" stroke="#3f8f8f" stroke-width="0.7"></path><path d="M3.2 5.4L2 6.8L3.2 8.2M5.8 5.4L7 6.8L5.8 8.2M5 5L4 8.6" fill="none" stroke="#3f8f8f" stroke-width="0.7"></path></svg>
<span class="t " style="left: 1415.5px; top: 433.8px; font-size: 11.6px; line-height: 28.6px; color: rgb(34, 34, 34); letter-spacing: -0.268px;">Generata</span>
<svg style="left:1710px;top:443.4px" width="9" height="9" viewBox="0 0 9 9"><circle cx="4.5" cy="4.5" r="4.2" fill="#2d7a3a"></circle><path d="M2.4 4.6L3.9 6.1L6.6 3.2" fill="none" stroke="#8adc6a" stroke-width="1.1"></path></svg>
<span class="t " style="left: 1722px; top: 433.8px; font-size: 11.6px; line-height: 28.6px; color: rgb(34, 34, 34); letter-spacing: -0.487px;">Pagato</span>
<div class="a" style="left:1845.5px;top:0;width:3.2px;height:732px;background:#666;border-radius:2px"></div>

</body></html>
